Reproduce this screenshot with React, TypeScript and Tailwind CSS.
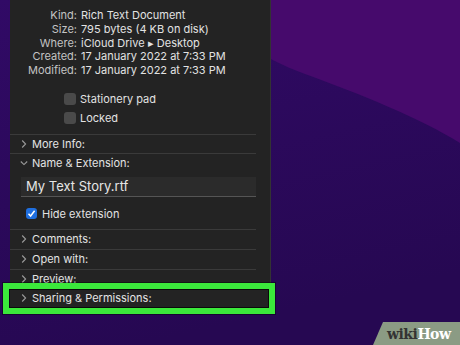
import React from 'react';

function Chevron({ open }: { open?: boolean }) {
  return (
    <svg width="8" height="8" viewBox="0 0 8 8" className="shrink-0">
      {open ? (
        <polyline points="0.8,2.5 4,5.6 7.2,2.5" fill="none" stroke="#9a9a9a" strokeWidth="1.1" />
      ) : (
        <polyline points="2.2,0.5 5.6,4 2.2,7.5" fill="none" stroke="#9a9a9a" strokeWidth="1.1" />
      )}
    </svg>
  );
}

function Section({ label, open, h = 'h-[19px]' }: { label: string; open?: boolean; h?: string }) {
  return (
    <div className={`${h} flex items-center pl-[10px]`}>
      <Chevron open={open} />
      <span className="ml-[4px] text-[11px] text-[#e4e4e4]">{label}</span>
    </div>
  );
}

function Sep() {
  return <div className="h-px w-[246px] bg-[#3a3a3a]" />;
}

export default function App() {
  const info = [
    ['Kind:', 'Rich Text Document'],
    ['Size:', '795 bytes (4 KB on disk)'],
    ['Where:', 'iCloud Drive ▸ Desktop'],
    ['Created:', '17 January 2022 at 7:33 PM'],
    ['Modified:', '17 January 2022 at 7:33 PM'],
  ];

  return (
    <div className="relative w-[460px] h-[345px] overflow-hidden bg-[#2c0a5e] font-['Inter',sans-serif]">
      <svg className="absolute inset-0" width="460" height="345" viewBox="0 0 460 345">
        <defs>
          <linearGradient id="low" x1="0" y1="0" x2="0.3" y2="1">
            <stop offset="0" stopColor="#310a66" />
            <stop offset="1" stopColor="#260852" />
          </linearGradient>
        </defs>
        <rect width="460" height="345" fill="url(#low)" />
        <path d="M180,0 H460 V143 C420,118 360,94 305,74 C260,58 225,30 180,0 Z" fill="#460a6c" />
      </svg>

      <div className="relative ml-[10px] w-[261px] h-[312px] bg-[#232323] border-r border-[#333]">
        <div className="pt-[9px]">
          {info.map(([k, v]) => (
            <div key={k} className="flex leading-[13.75px] text-[11px]">
              <span className="w-[67px] text-right text-[#c4c4c4]">{k}</span>
              <span className="ml-[4px] text-[#e2e2e2]">{v}</span>
            </div>
          ))}
        </div>

        <div className="mt-[12px] pl-[54px]">
          {['Stationery pad', 'Locked'].map((t) => (
            <div key={t} className="h-[19px] flex items-center">
              <span className="w-[12px] h-[12px] rounded-[3px] bg-[#4a4a4a]" />
              <span className="ml-[4px] text-[11px] text-[#e2e2e2]">{t}</span>
            </div>
          ))}
        </div>

        <div className="mt-[6px]">
          <Sep />
          <Section label="More Info:" h="h-[18px]" />
          <Sep />
          <Section label="Name & Extension:" open h="h-[18px]" />
          <div className="mt-[5px] ml-[11px] w-[235px] h-[20px] bg-[#2b2b2b] border-b border-[#555] flex items-center pl-[5px] text-[13px] text-[#e6e6e6]">
            My Text Story.rtf
          </div>
          <div className="mt-[8px] h-[18px] flex items-center pl-[16px]">
            <span className="w-[11px] h-[11px] rounded-[3px] bg-[#1f6fe0] flex items-center justify-center">
              <svg width="9" height="9" viewBox="0 0 9 9">
                <polyline points="1.5,4.8 3.6,7 7.6,1.8" fill="none" stroke="#fff" strokeWidth="1.5" />
              </svg>
            </span>
            <span className="ml-[5px] text-[11px] text-[#e2e2e2]">Hide extension</span>
          </div>
          <div className="mt-[6px]">
            <Sep />
            <Section label="Comments:" />
            <Sep />
            <Section label="Open with:" />
            <Sep />
            <Section label="Preview:" />
            <Section label="Sharing & Permissions:" />
          </div>
        </div>
      </div>

      <div className="absolute left-[3px] top-[283px] w-[272px] h-[31px] border-[6px] border-[#3be83b] shadow-[inset_0_0_0_1px_rgba(0,0,0,0.7)] outline outline-1 outline-black/40" />

      <div className="absolute right-0 bottom-0 w-[87px] h-[23px]">
        <svg className="absolute inset-0" width="87" height="23" viewBox="0 0 87 23">
          <polygon points="10,0 87,0 87,23 0,23" fill="#8b9b84" />
        </svg>
        <span className="relative block pl-[14px] pt-[2px] text-[14px] leading-[20px] font-bold font-['DejaVu_Serif',serif] tracking-[-0.5px]">
          <span className="text-[#333]">wiki</span>
          <span className="text-white">How</span>
        </span>
      </div>
    </div>
  );
}
